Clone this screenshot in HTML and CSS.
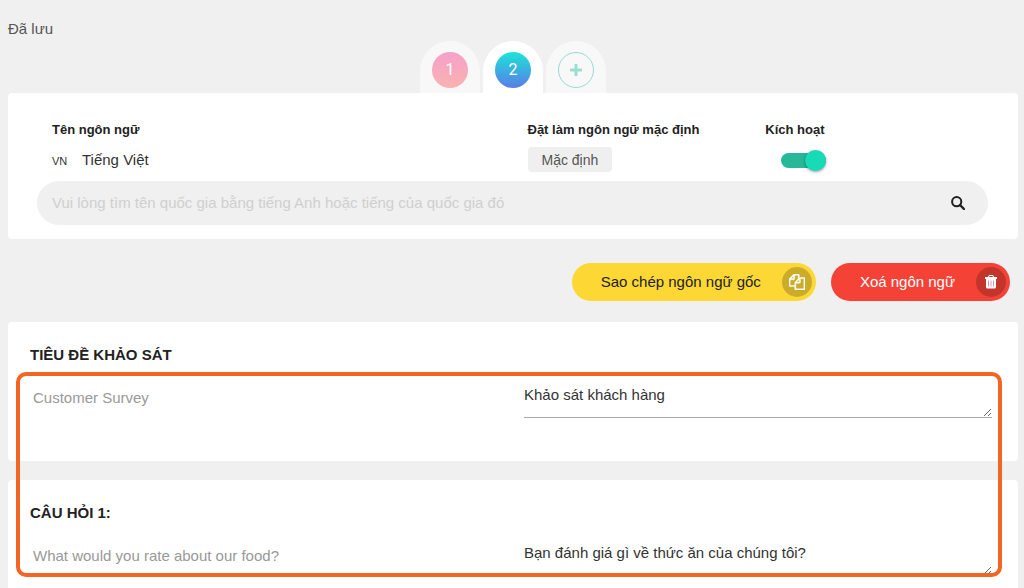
FILE: index.html
```html
<!DOCTYPE html>
<html lang="vi">
<head>
    <meta charset="UTF-8">
    <meta name="viewport" content="width=device-width, initial-scale=1.0">
    <title>Ngôn ngữ khảo sát</title>
    <link rel="stylesheet" href="styles.css">
</head>
<body>
    <header class="status">Đã lưu</header>

    <!-- Language tabs -->
    <nav class="tabs">
        <button type="button" class="tab"><span class="dot dot-pink">1</span></button>
        <button type="button" class="tab active"><span class="dot dot-blue">2</span></button>
        <button type="button" class="tab" aria-label="Thêm ngôn ngữ">
            <span class="dot dot-add">
                <svg width="12" height="12" viewBox="0 0 12 12"><path d="M6 1v10M1 6h10" stroke="#97e0cd" stroke-width="3" stroke-linecap="round"/></svg>
            </span>
        </button>
    </nav>

    <!-- Language settings -->
    <section class="card language">
        <div class="language-info">
            <div class="field">
                <h2 class="label">Tên ngôn ngữ</h2>
                <p class="language-name"><span class="code">VN</span>Tiếng Việt</p>
            </div>
            <div class="field">
                <h2 class="label">Đặt làm ngôn ngữ mặc định</h2>
                <button type="button" class="default-button">Mặc định</button>
            </div>
            <div class="field">
                <label class="label" for="enabled">Kích hoạt</label>
                <input type="checkbox" id="enabled" class="switch" checked>
            </div>
        </div>
        <form class="search">
            <input type="text" class="search-input" aria-label="Tìm ngôn ngữ" placeholder="Vui lòng tìm tên quốc gia bằng tiếng Anh hoặc tiếng của quốc gia đó">
            <button type="button" class="search-button" aria-label="Tìm">
                <svg width="14" height="14" viewBox="0 0 14 14" fill="none" stroke="#222" stroke-width="2"><circle cx="5.7" cy="5.7" r="4.6"/><path d="M9 9l4 4" stroke-width="2.4" stroke-linecap="round"/></svg>
            </button>
        </form>
    </section>

    <div class="actions">
        <button type="button" class="action copy">
            <span class="action-text">Sao chép ngôn ngữ gốc</span>
            <span class="action-icon">
                <svg width="16" height="16" viewBox="0 0 1792 1792" fill="#fff" stroke="#fff" stroke-width="50"><path d="M1696 384q40 0 68 28t28 68v1216q0 40-28 68t-68 28h-960q-40 0-68-28t-28-68v-288h-544q-40 0-68-28t-28-68v-672q0-40 20-88t48-76l408-408q28-28 76-48t88-20h416q40 0 68 28t28 68v328q68-40 128-40h416zm-544 213l-299 299h299v-299zm-640-384l-299 299h299v-299zm196 647l316-316v-416h-384v416q0 40-28 68t-68 28h-416v640h512v-256q0-40 20-88t48-76zm956 804v-1152h-384v416q0 40-28 68t-68 28h-416v640h896z"/></svg>
            </span>
        </button>
        <button type="button" class="action delete">
            <span class="action-text">Xoá ngôn ngữ</span>
            <span class="action-icon">
                <svg width="12" height="14" viewBox="0 0 12 14" fill="#fff"><path d="M4 0h4l1 2h3v2H0V2h3zM4.500 1L4 2h4l-.5-1z" fill-rule="evenodd"/><path d="M1 4h10v8q0 1.500-1.500 1.500h-7Q1 13.500 1 12z"/><path d="M3.500 5.500v6M6 5.500v6M8.500 5.500v6" stroke="#e991a8"/></svg>
            </span>
        </button>
    </div>

    <!-- Translations -->
    <main class="translations">
        <section class="card item">
            <h2 class="title">TIÊU ĐỀ KHẢO SÁT</h2>
            <div class="pair">
                <label class="source" for="surveyTitle">Customer Survey</label>
                <textarea id="surveyTitle" class="translation">Khảo sát khách hàng</textarea>
            </div>
        </section>
        <section class="card item last">
            <h2 class="title">CÂU HỎI 1:</h2>
            <div class="pair">
                <label class="source" for="question1">What would you rate about our food?</label>
                <textarea id="question1" class="translation">Bạn đánh giá gì về thức ăn của chúng tôi?</textarea>
            </div>
        </section>
        <div class="highlight"></div>
    </main>
</body>
</html>
```

FILE: styles.css
```css
* {
    box-sizing: border-box;
}
body {
    display: flex;
    flex-direction: column;
    min-height: 100vh;
    margin: 0;
    padding: 0 6px 0 8px;
    background: #f0f0f0;
    color: #333;
    font-family: "Liberation Sans", Arial, sans-serif;
    font-size: 15px;
    line-height: 20px;
}
h2, p {
    margin: 0;
}
button, input, textarea {
    font: inherit;
    color: inherit;
}
button {
    border: 0;
    padding: 0;
    cursor: pointer;
}
svg {
    display: block;
}
.status {
    padding: 19px 0 2px;
    color: #555;
}
.card {
    background: #fff;
    border-radius: 4px;
}

/* Tabs */
.tabs {
    display: flex;
    justify-content: center;
    gap: 3px;
}
.tab {
    display: flex;
    justify-content: center;
    width: 60px;
    height: 52px;
    padding-top: 11px;
    background: #f8f8f8;
    border-radius: 30px 30px 0 0;
}
.tab.active {
    background: #fff;
}
.dot {
    display: flex;
    align-items: center;
    justify-content: center;
    width: 36px;
    height: 36px;
    border-radius: 50%;
    color: #fff;
    font-family: Roboto, sans-serif;
    font-size: 16px;
}
.dot-pink {
    background: linear-gradient(#f5a0cb, #fab2b0);
}
.dot-blue {
    background: linear-gradient(#1ae5d8, #5b7be8);
}
.dot-add {
    border: 1px solid #97d9d3;
}

/* Language card */
.language {
    padding: 27px 30px 14px 29px;
}
.language-info {
    display: grid;
    grid-template-columns: 2fr 1fr 1fr;
}
.field {
    display: flex;
    flex-direction: column;
    align-items: flex-start;
    gap: 7px;
    height: 61px;
    padding: 0 15px;
}
.label {
    color: #222;
    font-size: 13px;
    font-weight: bold;
    line-height: 20px;
}
.language-name {
    line-height: 25px;
}
.code {
    display: inline-block;
    width: 30px;
    font-size: 11px;
}
.default-button {
    height: 25px;
    padding: 0 14px;
    background: #efefef;
    border-radius: 4px;
    color: #555;
    font-size: 14px;
}
.switch {
    appearance: none;
    width: 45px;
    height: 15px;
    margin: 6px 0 0 16px;
    background: #26b899;
    border-radius: 8px;
    cursor: pointer;
}
.switch::before {
    content: "";
    display: block;
    width: 21px;
    height: 21px;
    margin-top: -3px;
    background: #ccc;
    border-radius: 50%;
    box-shadow: 0 1px 3px rgba(0, 0, 0, 0.4);
}
.switch:checked::before {
    margin-left: auto;
    background: #16dbb5;
}
.search {
    display: flex;
    height: 44px;
    padding: 0 23px 0 15px;
    background: #f0f0f0;
    border-radius: 22px;
}
.search-input {
    flex: 1;
    min-width: 0;
    padding: 0;
    border: 0;
    outline: 0;
    background: transparent;
}
.search-input::placeholder {
    color: #cfcfcf;
}
.search-button {
    background: transparent;
}

/* Actions */
.actions {
    display: flex;
    justify-content: flex-end;
    gap: 15px;
    padding: 24px 8px 21px;
}
.action {
    display: flex;
    align-items: center;
    gap: 21px;
    height: 38px;
    padding: 0 4px 0 29px;
    border-radius: 19px;
}
.copy {
    background: #fdd835;
    color: #222;
}
.delete {
    background: #f44336;
    color: #fff;
}
.action-icon {
    display: flex;
    align-items: center;
    justify-content: center;
    width: 30px;
    height: 30px;
    background: rgba(0, 0, 0, 0.2);
    border-radius: 50%;
}

/* Translations */
.translations {
    position: relative;
    display: flex;
    flex: 1;
    flex-direction: column;
    gap: 19px;
}
.item {
    padding: 23px 26px 43px 22px;
}
.last {
    flex: 1;
    padding-bottom: 12px;
    border-radius: 4px 4px 0 0;
}
.title {
    color: #222;
    font-size: 15px;
    font-weight: bold;
    line-height: 20px;
}
.pair {
    display: grid;
    grid-template-columns: 1fr 1fr;
    gap: 26px;
    padding-top: 20px;
}
.source {
    padding: 3px;
    color: #999;
}
.translation {
    width: 100%;
    height: 33px;
    padding: 0;
    border: 0;
    border-bottom: 1px solid #aaa;
    outline: 0;
    background: transparent;
    overflow: hidden;
    resize: vertical;
}
.highlight {
    position: absolute;
    top: 50px;
    right: 16px;
    bottom: 11px;
    left: 8px;
    border: 4px solid #f26522;
    border-radius: 10px;
    pointer-events: none;
}
```
